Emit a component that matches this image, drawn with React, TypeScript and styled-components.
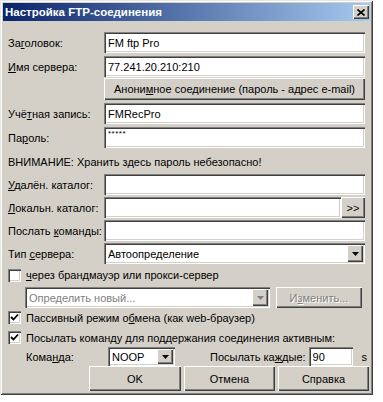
import React from "react";
import styled, { createGlobalStyle } from "styled-components";

const GlobalStyle = createGlobalStyle`
  html, body {
    margin: 0;
    padding: 0;
    background: #ffffff;
  }
  body {
    font-family: "Liberation Sans", Arial, sans-serif;
    font-size: 11px;
    color: #000000;
  }
  u {
    text-underline-offset: 1px;
  }
`;

const sunken = `
  background: #ffffff;
  box-shadow: inset 1px 1px #808080, inset 2px 2px #404040,
    inset -1px -1px #ffffff, inset -2px -2px #d4d0c8;
`;

const raised = `
  background: #d4d0c8;
  box-shadow: inset 1px 1px #ffffff, inset -1px -1px #404040,
    inset -2px -2px #808080;
`;

const Dialog = styled.div`
  width: 373px;
  height: 395px;
  box-sizing: border-box;
  padding: 3px;
  background: #d4d0c8;
  display: flex;
  flex-direction: column;
  box-shadow: inset 1px 1px #e8e6e0, inset -1px -1px #404040,
    inset 2px 2px #ffffff, inset -2px -2px #808080;
`;

const TitleBar = styled.div`
  height: 18px;
  display: flex;
  align-items: center;
  justify-content: space-between;
  padding: 0 1px 0 2px;
  background: linear-gradient(to right, #0a246a, #a6caf0);
  color: #ffffff;
  font-weight: bold;
  font-size: 11.5px;
`;

const CloseBox = styled.div`
  width: 16px;
  height: 14px;
  ${raised};
  display: flex;
  align-items: center;
  justify-content: center;
`;

const Body = styled.div`
  display: flex;
  flex-direction: column;
  padding: 0 5px;
`;

const Row = styled.div<{ $mt: number; $h: number }>`
  display: grid;
  grid-template-columns: 96px 1fr;
  align-items: center;
  height: ${(p) => p.$h}px;
  margin-top: ${(p) => p.$mt}px;
`;

const Label = styled.span`
  white-space: nowrap;
`;

const Field = styled.div<{ $w?: number; $off?: boolean; $ml?: number }>`
  ${sunken};
  box-sizing: border-box;
  flex: none;
  height: 100%;
  width: ${(p) => (p.$w ? `${p.$w}px` : "auto")};
  margin-left: ${(p) => p.$ml ?? 0}px;
  display: flex;
  align-items: center;
  padding: 2px 2px 2px 4px;
  color: ${(p) => (p.$off ? "#808080" : "#000000")};
`;

const FieldText = styled.span`
  flex: 1;
  white-space: nowrap;
  overflow: hidden;
`;

const Stars = styled.span`
  flex: 1;
  align-self: flex-start;
  font-size: 8px;
  line-height: 10px;
  letter-spacing: 0.5px;
`;

const ArrowBox = styled.div`
  width: 16px;
  align-self: stretch;
  ${raised};
  display: flex;
  align-items: center;
  justify-content: center;
`;

const WithSide = styled.div`
  display: flex;
  height: 100%;
`;

const Button = styled.button<{ $w?: number; $off?: boolean }>`
  ${raised};
  border: 0;
  margin: 0;
  padding: 0;
  box-sizing: border-box;
  height: 100%;
  width: ${(p) => (p.$w ? `${p.$w}px` : "auto")};
  font-family: "Liberation Sans", Arial, sans-serif;
  font-size: 11px;
  color: ${(p) => (p.$off ? "#808080" : "#000000")};
  text-shadow: ${(p) => (p.$off ? "1px 1px #ffffff" : "none")};
`;

const Warning = styled.div<{ $mt: number; $h: number }>`
  height: ${(p) => p.$h}px;
  margin-top: ${(p) => p.$mt}px;
  display: flex;
  align-items: center;
`;

const CheckRow = styled.label<{ $mt: number; $h: number }>`
  height: ${(p) => p.$h}px;
  margin-top: ${(p) => p.$mt}px;
  display: flex;
  align-items: center;
  gap: 5px;
`;

const CheckBox = styled.span`
  width: 13px;
  height: 13px;
  box-sizing: border-box;
  ${sunken};
  display: flex;
  align-items: center;
  justify-content: center;
`;

const SubRow = styled.div<{ $mt: number; $h: number; $pl: number }>`
  height: ${(p) => p.$h}px;
  margin-top: ${(p) => p.$mt}px;
  padding-left: ${(p) => p.$pl}px;
  display: flex;
  align-items: center;
`;

const InlineLabel = styled.span<{ $w?: number; $ml?: number }>`
  width: ${(p) => (p.$w ? `${p.$w}px` : "auto")};
  margin-left: ${(p) => p.$ml ?? 0}px;
  white-space: nowrap;
  flex: none;
`;

const Spacer = styled.span<{ $w: number }>`
  width: ${(p) => p.$w}px;
  flex: none;
`;

const ButtonBar = styled.div<{ $mt: number; $h: number }>`
  height: ${(p) => p.$h}px;
  margin-top: ${(p) => p.$mt}px;
  margin-right: -4px;
  display: flex;
  justify-content: flex-end;
  gap: 3px;
`;

const Arrow = ({ off }: { off?: boolean }) => (
  <svg width="7" height="4" viewBox="0 0 7 4">
    <path d="M0 0h7L3.5 4z" fill={off ? "#808080" : "#000000"} />
  </svg>
);

const Check = () => (
  <svg width="9" height="9" viewBox="0 0 9 9">
    <path d="M1 4l2.5 2.5L8 1.5" stroke="#000" strokeWidth="1.8" fill="none" />
  </svg>
);

const CloseIcon = () => (
  <svg width="8" height="7" viewBox="0 0 8 7">
    <path d="M0.5 0.5l7 6M7.5 0.5l-7 6" stroke="#000" strokeWidth="1.6" />
  </svg>
);

export default function App() {
  return (
    <>
      <GlobalStyle />
      <Dialog>
        <TitleBar>
          <span>Настройка FTP-соединения</span>
          <CloseBox>
            <CloseIcon />
          </CloseBox>
        </TitleBar>
        <Body>
          <Row $mt={11} $h={21}>
            <Label>
              За<u>г</u>оловок:
            </Label>
            <Field>
              <FieldText>FM ftp Pro</FieldText>
            </Field>
          </Row>
          <Row $mt={3} $h={21}>
            <Label>
              <u>И</u>мя сервера:
            </Label>
            <Field>
              <FieldText>77.241.20.210:210</FieldText>
            </Field>
          </Row>
          <Row $mt={1} $h={22}>
            <span />
            <Button>
              Анони<u>м</u>ное соединение (пароль - адрес e-mail)
            </Button>
          </Row>
          <Row $mt={3} $h={21}>
            <Label>
              Учё<u>т</u>ная запись:
            </Label>
            <Field>
              <FieldText>FMRecPro</FieldText>
            </Field>
          </Row>
          <Row $mt={3} $h={21}>
            <Label>
              Па<u>р</u>оль:
            </Label>
            <Field>
              <Stars>*****</Stars>
            </Field>
          </Row>
          <Warning $mt={3} $h={21}>
            ВНИМАНИЕ: Хранить здесь пароль небезопасно!
          </Warning>
          <Row $mt={2} $h={21}>
            <Label>
              <u>У</u>далён. каталог:
            </Label>
            <Field />
          </Row>
          <Row $mt={2} $h={21}>
            <Label>
              <u>Л</u>окальн. каталог:
            </Label>
            <WithSide>
              <Field style={{ flex: 1 }} />
              <Button $w={24}>&gt;&gt;</Button>
            </WithSide>
          </Row>
          <Row $mt={2} $h={21}>
            <Label>
              Послать <u>к</u>оманды:
            </Label>
            <Field />
          </Row>
          <Row $mt={2} $h={21}>
            <Label>
              Тип <u>с</u>ервера:
            </Label>
            <Field>
              <FieldText>Автоопределение</FieldText>
              <ArrowBox>
                <Arrow />
              </ArrowBox>
            </Field>
          </Row>
          <CheckRow $mt={2} $h={18}>
            <CheckBox />
            <span>
              <u>ч</u>ерез брандмауэр или прокси-сервер
            </span>
          </CheckRow>
          <SubRow $mt={3} $h={21} $pl={17}>
            <Field $w={245} $off>
              <FieldText>Определить новый...</FieldText>
              <ArrowBox>
                <Arrow off />
              </ArrowBox>
            </Field>
            <Spacer $w={6} />
            <Button $w={86} $off>
              И<u>з</u>менить...
            </Button>
          </SubRow>
          <CheckRow $mt={1} $h={17}>
            <CheckBox>
              <Check />
            </CheckBox>
            <span>
              Пассивный режим о<u>б</u>мена (как web-браузер)
            </span>
          </CheckRow>
          <CheckRow $mt={3} $h={17}>
            <CheckBox>
              <Check />
            </CheckBox>
            <span>
              Посылать коман<u>д</u>у для поддержания соединения активным:
            </span>
          </CheckRow>
          <SubRow $mt={1} $h={19} $pl={18}>
            <InlineLabel $w={82}>
              Кома<u>н</u>да:
            </InlineLabel>
            <Field $w={67}>
              <FieldText>NOOP</FieldText>
              <ArrowBox>
                <Arrow />
              </ArrowBox>
            </Field>
            <InlineLabel $ml={35}>
              Посылать ка<u>ж</u>дые:
            </InlineLabel>
            <Field $w={44} $ml={3}>
              <FieldText>90</FieldText>
            </Field>
            <InlineLabel $ml={9}>s</InlineLabel>
          </SubRow>
          <ButtonBar $mt={0} $h={25}>
            <Button $w={92}>OK</Button>
            <Button $w={91}>Отмена</Button>
            <Button $w={91}>Справка</Button>
          </ButtonBar>
        </Body>
      </Dialog>
    </>
  );
}
